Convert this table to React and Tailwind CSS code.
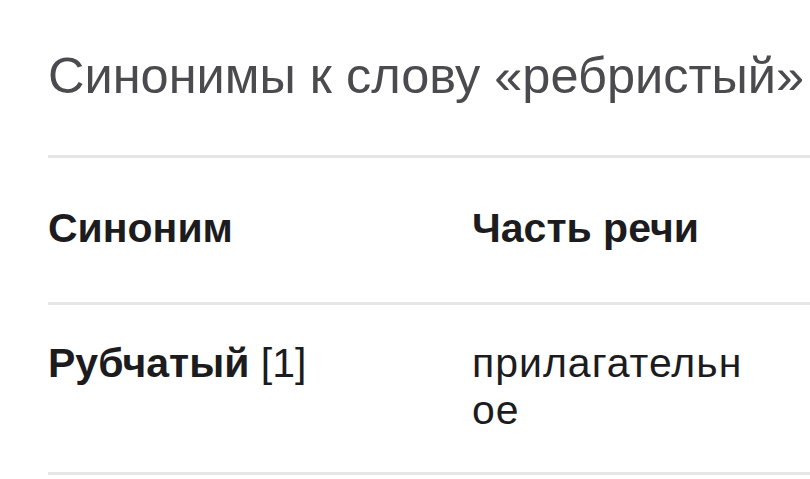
import React from 'react';

const rows = [
  { word: 'Рубчатый', ref: '[1]', part: 'прилагательное' },
];

export default function App() {
  return (
    <div className="w-[810px] h-[479px] overflow-hidden bg-white pl-12 text-[#1c1c1e]" style={{ fontFamily: '"Liberation Sans", Arial, sans-serif' }}>
      <h1 className="pt-[48px] pb-[51px] text-[50.5px] leading-[56px] font-normal text-[#4b4b4f] whitespace-nowrap">
        Синонимы к слову «ребристый»
      </h1>
      <div className="w-[900px]">
        <div className="grid grid-cols-[424px_300px] border-t-[3px] border-b-[3px] border-[#e6e6e6] pt-[47px] pb-[50px] text-[41px] leading-[47px] font-bold">
          <div>Синоним</div>
          <div>Часть речи</div>
        </div>
        {rows.map((r) => (
          <div key={r.word} className="grid grid-cols-[424px_272px] border-b-[3px] border-[#e6e6e6] pt-[35px] pb-[38px] text-[41px] leading-[47px]">
            <div>
              <span className="font-bold">{r.word}</span> {r.ref}
            </div>
            <div className="break-all tracking-[1px]">{r.part}</div>
          </div>
        ))}
      </div>
    </div>
  );
}
